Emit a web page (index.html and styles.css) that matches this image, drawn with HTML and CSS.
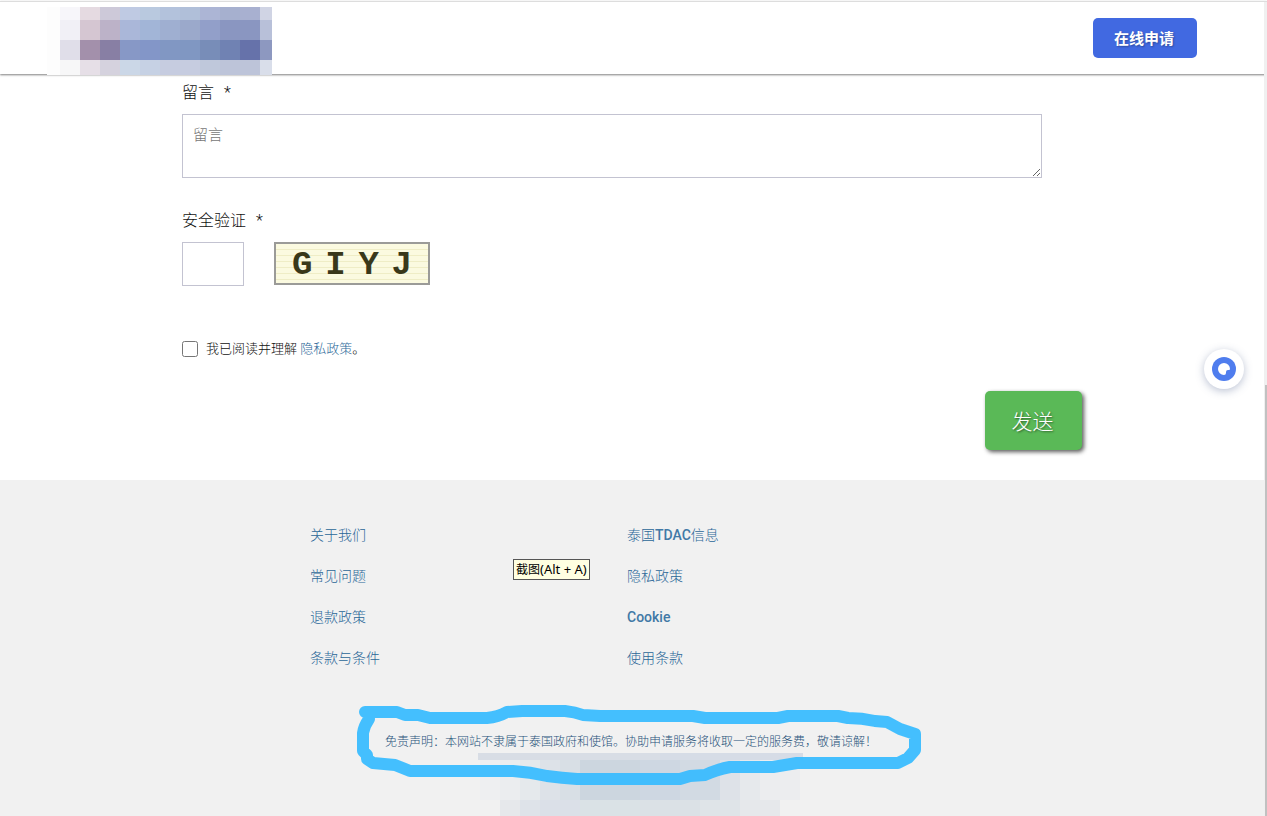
FILE: index.html
```html
<!DOCTYPE html>
<html lang="zh-CN">
<head>
    <meta charset="UTF-8">
    <meta name="viewport" content="width=device-width, initial-scale=1.0">
    <title>在线申请</title>
    <link rel="stylesheet" href="styles.css">
</head>

<body>
    <header class="header">
        <svg class="logo" width="225" height="68" viewBox="47 7 225 68" shape-rendering="crispEdges" aria-hidden="true">
            <rect x="47" y="7" width="13" height="68" fill="#fdfdfd"/>
            <!-- row 1 -->
            <rect x="60" y="7" width="20" height="13" fill="#f7f6fa"/>
            <rect x="80" y="7" width="20" height="13" fill="#e5dae1"/>
            <rect x="100" y="7" width="20" height="13" fill="#cdc9d9"/>
            <rect x="120" y="7" width="20" height="13" fill="#bfcae3"/>
            <rect x="140" y="7" width="20" height="13" fill="#b9c9df"/>
            <rect x="160" y="7" width="20" height="13" fill="#b3c2dc"/>
            <rect x="180" y="7" width="20" height="13" fill="#b0bfd9"/>
            <rect x="200" y="7" width="20" height="13" fill="#acb5d5"/>
            <rect x="220" y="7" width="20" height="13" fill="#a6b0cf"/>
            <rect x="240" y="7" width="20" height="13" fill="#a8b0d0"/>
            <rect x="260" y="7" width="12" height="13" fill="#d0d4e4"/>
            <!-- row 2 -->
            <rect x="60" y="20" width="20" height="20" fill="#f1f0f6"/>
            <rect x="80" y="20" width="20" height="20" fill="#d5c6d2"/>
            <rect x="100" y="20" width="20" height="20" fill="#bcb2c8"/>
            <rect x="120" y="20" width="20" height="20" fill="#aab7d9"/>
            <rect x="140" y="20" width="20" height="20" fill="#a2b5d7"/>
            <rect x="160" y="20" width="20" height="20" fill="#9fafd1"/>
            <rect x="180" y="20" width="20" height="20" fill="#9ba9cb"/>
            <rect x="200" y="20" width="20" height="20" fill="#929fc9"/>
            <rect x="220" y="20" width="40" height="20" fill="#8a96c1"/>
            <rect x="260" y="20" width="12" height="20" fill="#b8c0d9"/>
            <!-- row 3 -->
            <rect x="60" y="40" width="20" height="20" fill="#e0dee9"/>
            <rect x="80" y="40" width="20" height="20" fill="#a390ab"/>
            <rect x="100" y="40" width="20" height="20" fill="#887fa4"/>
            <rect x="120" y="40" width="20" height="20" fill="#8798c6"/>
            <rect x="140" y="40" width="20" height="20" fill="#8396c8"/>
            <rect x="160" y="40" width="20" height="20" fill="#8197c3"/>
            <rect x="180" y="40" width="20" height="20" fill="#8097c2"/>
            <rect x="200" y="40" width="20" height="20" fill="#788db8"/>
            <rect x="220" y="40" width="20" height="20" fill="#7082b3"/>
            <rect x="240" y="40" width="20" height="20" fill="#6672aa"/>
            <rect x="260" y="40" width="12" height="20" fill="#8d98c0"/>
            <!-- row 4 -->
            <rect x="60" y="60" width="20" height="15" fill="#f7f7f8"/>
            <rect x="80" y="60" width="20" height="15" fill="#e6dfe7"/>
            <rect x="100" y="60" width="20" height="15" fill="#d5d2de"/>
            <rect x="120" y="60" width="20" height="15" fill="#cbd7e7"/>
            <rect x="140" y="60" width="20" height="15" fill="#c6d1e4"/>
            <rect x="160" y="60" width="40" height="15" fill="#c6cce0"/>
            <rect x="200" y="60" width="20" height="15" fill="#bfc8db"/>
            <rect x="220" y="60" width="40" height="15" fill="#bdc4d9"/>
            <rect x="260" y="60" width="12" height="15" fill="#d9deea"/>
        </svg>
        <button type="button" class="apply-btn">在线申请</button>
    </header>

    <main class="main">
        <form class="contact-form">
            <label class="label" for="message">留言 <span class="star">*</span></label>
            <textarea class="message" id="message" placeholder="留言"></textarea>

            <label class="label" for="code">安全验证 <span class="star">*</span></label>
            <div class="captcha-row">
                <input type="text" class="code" id="code">
                <div class="captcha">
                    <span>G</span><span>I</span><span>Y</span><span>J</span>
                </div>
            </div>

            <div class="agree">
                <input type="checkbox" class="check" id="agree">
                <label for="agree">我已阅读并理解 <a href="#">隐私政策</a>。</label>
            </div>

            <button type="submit" class="send-btn">发送</button>
        </form>
    </main>

    <footer class="footer">
        <div class="footer-inner">
            <ul class="links">
                <li><a href="#">关于我们</a></li>
                <li><a href="#">泰国<span class="latin">TDAC</span>信息</a></li>
                <li><a href="#">常见问题</a></li>
                <li><a href="#">隐私政策</a></li>
                <li><a href="#">退款政策</a></li>
                <li><a href="#"><span class="latin">Cookie</span></a></li>
                <li><a href="#">条款与条件</a></li>
                <li><a href="#">使用条款</a></li>
            </ul>
            <div class="tooltip" role="tooltip">截图<span class="keys">(Alt + A)</span></div>

            <div class="notice">
                <svg class="marker" width="634" height="126" viewBox="310 690 634 126" aria-hidden="true">
                    <g shape-rendering="crispEdges">
                        <rect x="478" y="753" width="182" height="7" fill="#d8dde5"/>
                        <rect x="660" y="753" width="143" height="7" fill="#d6dce6"/>
                        <rect x="480" y="760" width="20" height="40" fill="#eeeff1"/>
                        <rect x="500" y="760" width="20" height="40" fill="#ebedef"/>
                        <rect x="520" y="760" width="20" height="40" fill="#e5e9ec"/>
                        <rect x="540" y="760" width="20" height="40" fill="#dde2e8"/>
                        <rect x="560" y="760" width="20" height="40" fill="#d8dfe5"/>
                        <rect x="580" y="760" width="60" height="40" fill="#ccd6df"/>
                        <rect x="640" y="760" width="40" height="40" fill="#ced7e2"/>
                        <rect x="680" y="760" width="40" height="40" fill="#d2dae3"/>
                        <rect x="720" y="760" width="20" height="40" fill="#dee2e8"/>
                        <rect x="740" y="760" width="20" height="40" fill="#e6e9ec"/>
                        <rect x="760" y="760" width="40" height="40" fill="#ecedef"/>
                        <rect x="500" y="800" width="20" height="16" fill="#e6e8eb"/>
                        <rect x="520" y="800" width="20" height="16" fill="#dee3e9"/>
                        <rect x="540" y="800" width="40" height="16" fill="#dbe0e8"/>
                        <rect x="580" y="800" width="60" height="16" fill="#dae2e6"/>
                        <rect x="640" y="800" width="60" height="16" fill="#dbe1e6"/>
                        <rect x="700" y="800" width="40" height="16" fill="#dfe4e8"/>
                        <rect x="740" y="800" width="40" height="16" fill="#e6e8eb"/>
                    </g>
                    <path d="M365 712H397L405 715H418L430 718H487Q498 717 507 712L522 711H565Q575 712 583 715L600 716H693L705 718H778L788 716H838L848 718Q862 718 875 721L887 722L900 729L915 734L915 750L908 758L904 760L898 763H797L773 767H730Q715 770 705 775L690 776L680 779H577Q562 778 547 776Q530 772 513 771H410L395 765L373 763L367 759V755L363 751V733Q364 726 369 719L368 712" fill="none" stroke="#35bbff" stroke-opacity=".92" stroke-width="12" stroke-linejoin="round" stroke-linecap="round"/>
                </svg>
                <p class="disclaimer">免责声明：本网站不隶属于泰国政府和使馆。协助申请服务将收取一定的服务费，敬请谅解！</p>
            </div>
        </div>
    </footer>

    <button type="button" class="chat" aria-label="chat">
        <svg width="24" height="24" viewBox="0 0 24 24" aria-hidden="true">
            <circle cx="12" cy="12" r="12" fill="#4f7dee"/>
            <path d="M18 12A6 6 0 1 0 12 18Q14 18 14 16V15Q14 13 16 13H17Q18 13 18 12Z" fill="#fff"/>
        </svg>
    </button>
    <div class="scrollbar"></div>
</body>
</html>
```
FILE: styles.css
```css
* {
    box-sizing: border-box;
}
body {
    display: flex;
    flex-direction: column;
    min-height: 100vh;
    margin: 0;
    padding-right: 3px;
    font-family: Roboto, "Noto Sans CJK SC", sans-serif;
    font-size: 14px;
    font-weight: 300;
    color: #111;
    background: #fff;
}
a {
    color: #2a6798;
    text-decoration: none;
}
button, input, textarea {
    font-family: inherit;
}

.header {
    display: flex;
    justify-content: space-between;
    align-items: flex-start;
    height: 73px;
    margin-top: 1px;
    margin-right: -3px;
    padding: 5px 70px 0 47px;
    border-top: 1px solid #ddd;
    box-shadow: 0 1px 2px rgba(0, 0, 0, 0.5);
}
.logo {
    display: block;
}
.apply-btn {
    width: 104px;
    height: 40px;
    margin-top: 11px;
    padding: 0 2px 2px 0;
    border: none;
    border-radius: 5px;
    background: #4169e1;
    color: #fff;
    font-size: 15px;
    font-weight: 700;
    text-shadow: 1px 1px 2px rgba(0, 0, 0, 0.3);
}

.contact-form {
    display: flex;
    flex-direction: column;
    max-width: 900px;
    margin: 0 auto;
    padding: 7px 0 30px;
}
.label {
    font-size: 16px;
    line-height: 24px;
}
.star {
    margin-left: 6px;
}
.message {
    height: 64px;
    margin: 9px 40px 31px 0;
    padding: 10px;
    border: 1px solid #c3c3d1;
    font-size: 15px;
    font-weight: 300;
    line-height: 20px;
}
.message::placeholder {
    color: #777;
}
.captcha-row {
    display: flex;
    gap: 30px;
    margin-top: 9px;
}
.code {
    width: 62px;
    height: 44px;
    border: 1px solid #c3c3d1;
}
.captcha {
    display: flex;
    justify-content: space-between;
    align-items: center;
    width: 156px;
    height: 43px;
    padding: 3px 16px 0 16px;
    border: 2px solid #9b9b98;
    background: repeating-linear-gradient(#fbfae0 0 5px, #efedc6 5px 6px);
    color: #39381a;
    font-family: "Liberation Mono", monospace;
    font-size: 34px;
    font-weight: 700;
    line-height: 36px;
}
.agree {
    display: flex;
    align-items: center;
    gap: 8px;
    margin-top: 52px;
    font-size: 13px;
    line-height: 22px;
}
.check {
    width: 16px;
    height: 16px;
    margin: 0;
}
.send-btn {
    align-self: flex-end;
    width: 97px;
    height: 59px;
    margin-top: 31px;
    padding: 0 2px 2px 0;
    border: none;
    border-radius: 5px;
    background: #5ab957;
    color: #fff;
    font-size: 21px;
    font-weight: 300;
    text-shadow: 1px 1px 2px rgba(0, 0, 0, 0.5);
    box-shadow: 2px 2px 4px rgba(0, 0, 0, 0.65);
}

.footer {
    flex: 1;
    padding: 35px 10px 0 0;
    background: #f1f1f1;
}
.footer-inner {
    position: relative;
    max-width: 634px;
    margin: 0 auto;
}
.links {
    display: grid;
    grid-template-columns: 1fr 1fr;
    margin: 0;
    padding: 0;
    list-style: none;
    line-height: 41px;
}
.latin {
    font-weight: 500;
    color: #4179a6;
}
.tooltip {
    position: absolute;
    left: 203px;
    top: 44px;
    padding: 0 2px;
    border: 1px solid #555;
    background: #ffffe1;
    color: #000;
    font-family: "Noto Sans", "Noto Sans CJK SC", sans-serif;
    font-size: 12px;
    font-weight: 400;
    line-height: 19px;
    white-space: nowrap;
}
.keys {
    font-size: 13px;
}
.notice {
    position: relative;
    height: 126px;
    margin-top: 11px;
    padding: 42px 0 0 8px;
}
.marker {
    position: absolute;
    left: 0;
    top: 0;
}
.disclaimer {
    position: relative;
    margin: 0;
    color: #27527a;
    font-size: 12px;
    line-height: 20px;
    text-align: center;
}

.chat {
    position: fixed;
    right: 23px;
    top: 349px;
    display: flex;
    align-items: center;
    justify-content: center;
    width: 40px;
    height: 40px;
    padding: 0;
    border: none;
    border-radius: 50%;
    background: #fff;
    box-shadow: 0 2px 8px rgba(60, 80, 130, 0.35);
}
.scrollbar {
    position: fixed;
    right: 0;
    top: 2px;
    bottom: 0;
    width: 3px;
    background: linear-gradient(#f0f0f0 383px, #c1c1c1 383px);
    border-left: 1px solid #f0f0f0;
}
```
